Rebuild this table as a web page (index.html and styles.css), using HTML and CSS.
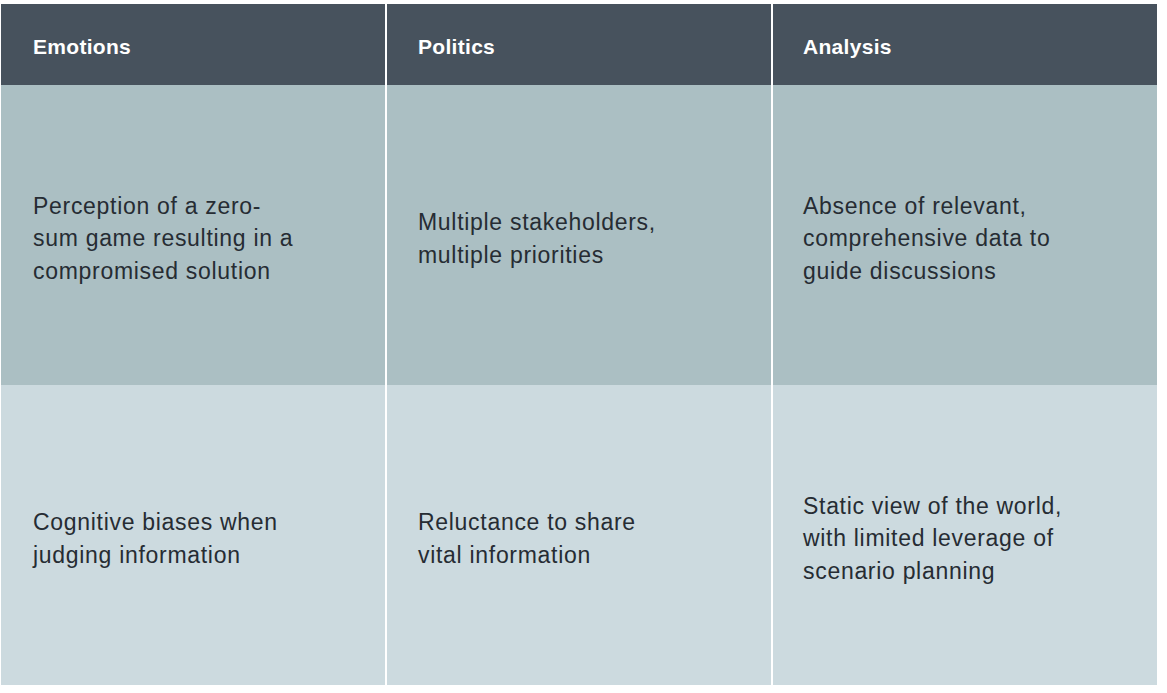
FILE: index.html
```html
<!DOCTYPE html>
<html>
<head>
<meta charset="utf-8">
<link rel="stylesheet" href="styles.css">
</head>
<body>
<div class="table">
  <div class="cell head">Emotions</div>
  <div class="cell head">Politics</div>
  <div class="cell head">Analysis</div>
  <div class="cell r1">Perception of a zero-<br>sum game resulting in a<br>compromised solution</div>
  <div class="cell r1">Multiple stakeholders,<br>multiple priorities</div>
  <div class="cell r1">Absence of relevant,<br>comprehensive data to<br>guide discussions</div>
  <div class="cell r2">Cognitive biases when<br>judging information</div>
  <div class="cell r2">Reluctance to share<br>vital information</div>
  <div class="cell r2">Static view of the world,<br>with limited leverage of<br>scenario planning</div>
</div>
</body>
</html>
```
FILE: styles.css
```css
html, body {
  margin: 0;
  padding: 0;
  background: #ffffff;
}
body {
  padding: 4px 0 0 1px;
  font-family: "Liberation Sans", Arial, sans-serif;
}
.table {
  width: 1156px;
  display: grid;
  grid-template-columns: 384px 384px 384px;
  grid-template-rows: 81px 300px 300px;
  column-gap: 2px;
}
.cell {
  display: flex;
  align-items: center;
  padding: 7px 16px 0 31px;
  color: #262c33;
  font-size: 23px;
  line-height: 32.5px;
  letter-spacing: 0.7px;
}
.cell:nth-child(3n+1) {
  padding-left: 32px;
}
.cell:nth-child(3n) {
  padding-left: 30px;
}
.head {
  background: #47525d;
  color: #ffffff;
  font-weight: bold;
  font-size: 21px;
  letter-spacing: 0.3px;
  padding-top: 5px;
}
.r1 {
  background: #abbfc3;
}
.r2 {
  background: #ccdadf;
}
```
